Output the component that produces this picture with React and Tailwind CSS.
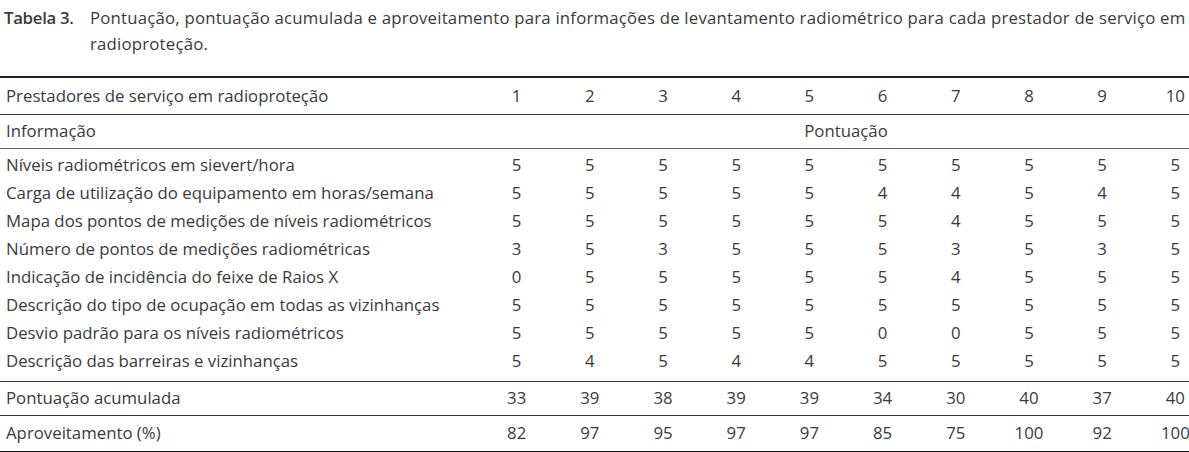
export default function App() {
  const rows = [
    ["Níveis radiométricos em sievert/hora", [5, 5, 5, 5, 5, 5, 5, 5, 5, 5]],
    ["Carga de utilização do equipamento em horas/semana", [5, 5, 5, 5, 5, 4, 4, 5, 4, 5]],
    ["Mapa dos pontos de medições de níveis radiométricos", [5, 5, 5, 5, 5, 5, 4, 5, 5, 5]],
    ["Número de pontos de medições radiométricas", [3, 5, 3, 5, 5, 5, 3, 5, 3, 5]],
    ["Indicação de incidência do feixe de Raios X", [0, 5, 5, 5, 5, 5, 4, 5, 5, 5]],
    ["Descrição do tipo de ocupação em todas as vizinhanças", [5, 5, 5, 5, 5, 5, 5, 5, 5, 5]],
    ["Desvio padrão para os níveis radiométricos", [5, 5, 5, 5, 5, 0, 0, 5, 5, 5]],
    ["Descrição das barreiras e vizinhanças", [5, 4, 5, 4, 4, 5, 5, 5, 5, 5]],
  ];
  const acc = [33, 39, 38, 39, 39, 34, 30, 40, 37, 40];
  const apr = [82, 97, 95, 97, 97, 85, 75, 100, 92, 100];
  const cols = [1, 2, 3, 4, 5, 6, 7, 8, 9, 10];
  return (
    <div className="w-[1189px] h-[452px] overflow-hidden bg-white text-[#3a3a3a] font-['Open_Sans',sans-serif] text-[16.8px]">
      <div className="w-[1212px]">
        <div className="flex pl-[4px] pt-[5px] leading-[26px]">
          <span className="font-semibold shrink-0 w-[86px] tracking-[-0.3px]">Tabela 3.</span>
          <span className="whitespace-nowrap tracking-[0.2px]">
            Pontuação, pontuação acumulada e aproveitamento para informações de levantamento radiométrico para cada prestador de serviço em
            <br />
            radioproteção.
          </span>
        </div>
        <table className="mt-[19px] w-[1212px] border-collapse table-fixed">
          <colgroup>
            <col className="w-[480px]" />
            {cols.map((c) => (
              <col key={c} className="w-[73.2px]" />
            ))}
          </colgroup>
          <tbody>
            <tr className="h-[37px] border-t-2 border-t-[#222] border-b border-b-[#333]">
              <td className="pl-[6px]">Prestadores de serviço em radioproteção</td>
              {cols.map((c) => (
                <td key={c} className="text-center">{c}</td>
              ))}
            </tr>
            <tr className="h-[34px] border-b border-b-[#666]">
              <td className="pl-[6px]">Informação</td>
              <td colSpan={10} className="text-center">Pontuação</td>
            </tr>
            <tr className="h-[3px]"><td colSpan={11}></td></tr>
            {rows.map(([label, vals]) => (
              <tr key={label} className="h-[28px]">
                <td className="pl-[6px]">{label}</td>
                {vals.map((v, i) => (
                  <td key={i} className="text-center">{v}</td>
                ))}
              </tr>
            ))}
            <tr className="h-[6px] border-b border-b-[#333]"><td colSpan={11}></td></tr>
            <tr className="h-[34px] border-b border-b-[#333]">
              <td className="pl-[6px]">Pontuação acumulada</td>
              {acc.map((v, i) => (
                <td key={i} className="text-center">{v}</td>
              ))}
            </tr>
            <tr className="h-[37px] border-b-[3px] border-b-[#111]">
              <td className="pl-[6px]">Aproveitamento (%)</td>
              {apr.map((v, i) => (
                <td key={i} className="text-center">{v}</td>
              ))}
            </tr>
          </tbody>
        </table>
      </div>
    </div>
  );
}
